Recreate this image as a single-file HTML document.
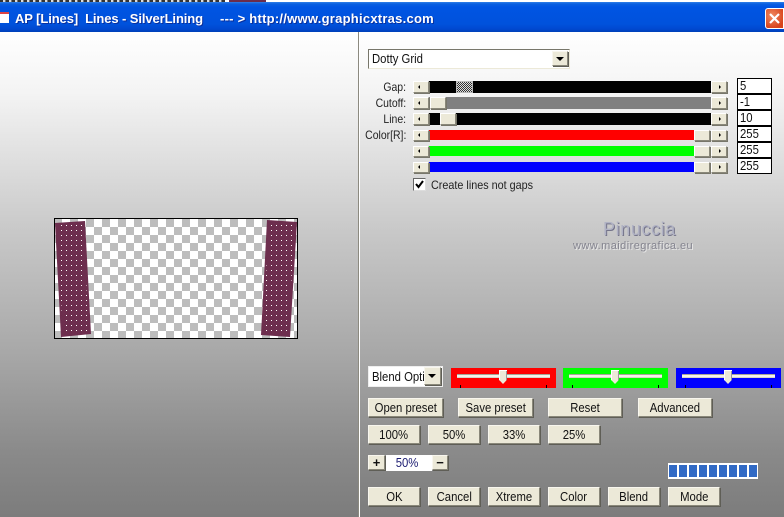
<!DOCTYPE html>
<html><head><meta charset="utf-8"><style>
html,body{margin:0;padding:0}
body{width:784px;height:517px;overflow:hidden;position:relative;background:#fff;font-family:"Liberation Sans",sans-serif;font-size:12px;color:#000}
div{box-sizing:border-box}
.a{position:absolute}
span{display:inline-block;transform:scaleX(.87);transform-origin:50% 50%;white-space:nowrap}
.b{position:absolute;background:#ece9d8;border:1px solid;border-color:#f8f6ee #8a887a #8a887a #f8f6ee;box-shadow:1px 1px 0 #5f5e56;text-align:center;color:#111;line-height:17px;font-size:13px;white-space:nowrap}
.l{position:absolute;text-align:right;width:60px;left:346px;color:#222;font-size:12px;line-height:14px}
.l span,.tl span{transform-origin:100% 50%}
.s{position:absolute;background:#ece9d8;border:1px solid;border-color:#fff #8a887a #8a887a #fff;box-shadow:1px 1px 0 #77766a}
.ar{position:absolute;width:0;height:0;border:2px solid transparent}
.i{position:absolute;left:737px;width:35px;height:16px;background:#fff;border:1px solid #000;font-size:13px;line-height:14px;padding-left:2px;color:#111}
.i span,.lft span{transform-origin:0 50%}
.sl{position:absolute;top:368px;height:20px;width:105px}
.tr{position:absolute;left:6px;top:6px;width:93px;height:4px;background:#f4f3ea;border-top:1px solid #a8a698;border-bottom:1px solid #d8d6c8}
.th{position:absolute;top:2px;width:8px;height:14px;background:#ece9d8;clip-path:polygon(0 0,100% 0,100% 70%,50% 100%,0 70%);box-shadow:inset 1px 1px 0 #fff,inset -1px 0 0 #999}
.tk{position:absolute;top:17px;width:1px;height:3px;background:#000}
</style></head><body>
<div class="a" style="left:0;top:0;width:784px;height:2px;background:#fff;overflow:hidden"><div class="a" style="left:0;top:0;width:225px;height:2px;background:repeating-linear-gradient(90deg,#333 0 3px,#ddd 3px 5px,#777 5px 6px)"></div><div class="a" style="left:229px;top:0;width:37px;height:2px;background:#6b2c4c"></div></div>
<div class="a" style="left:0;top:2px;width:784px;height:30px;background:linear-gradient(180deg,#2f7fe8 0,#0a5fe0 2px,#0054e3 5px,#0052dc 22px,#0048d0 27px,#0040b8 30px)"></div>
<div class="a" style="left:0;top:12px;width:9px;height:11px;background:#fff;border-top:2px solid #d44"></div>
<div class="a" style="left:15px;top:11px;color:#fff;font-weight:bold;font-size:13px;line-height:15px;white-space:pre;text-shadow:1px 1px 0 #0a2f9c;letter-spacing:-.1px">AP [Lines]  Lines - SilverLining</div>
<div class="a" style="left:220px;top:11px;color:#fff;font-weight:bold;font-size:13px;line-height:15px;white-space:pre;text-shadow:1px 1px 0 #0a2f9c;letter-spacing:.25px">--- &gt; http://www.graphicxtras.com</div>
<div class="a" style="left:765px;top:8px;width:19px;height:21px;background:radial-gradient(circle at 35% 35%,#f08a60,#d8431c 75%);border:1px solid #fff;border-radius:3px 0 0 3px"><svg width="17" height="19" style="display:block"><path d="M4 5L13 14M13 5L4 14" stroke="#fff" stroke-width="2.2"/></svg></div>

<div class="a" style="left:0;top:32px;width:784px;height:485px;background:linear-gradient(180deg,#fff 0,#f4f4f4 60px,#c8c8c8 200px,#a8a8a8 320px,#8a8a8a 420px,#7c7c7c 485px)"></div>
<div class="a" style="left:358px;top:32px;width:1px;height:485px;background:#8c8a80"></div>
<div class="a" style="left:359px;top:32px;width:1px;height:485px;background:#fff"></div>

<svg class="a" style="left:54px;top:218px" width="245" height="122" viewBox="0 0 245 122" shape-rendering="crispEdges">
<defs>
<pattern id="c" width="16" height="16" patternUnits="userSpaceOnUse" x="0" y="1"><rect width="16" height="16" fill="#fff"/><rect width="8" height="8" fill="#bdbdbd"/><rect x="8" y="8" width="8" height="8" fill="#bdbdbd"/></pattern>
<pattern id="d" width="5" height="5" patternUnits="userSpaceOnUse" x="2" y="2"><rect width="1" height="1" fill="#fff"/></pattern>
</defs>
<rect x=".5" y=".5" width="243" height="120" fill="url(#c)" stroke="#000"/>
<path d="M1 5L31 3L37 116L7 119Z" fill="#6d2e4e" shape-rendering="auto"/><path d="M3 7L29 5L35 114L9 117Z" fill="url(#d)"/>
<path d="M213 2L243 4L236 119L207 117Z" fill="#6d2e4e" shape-rendering="auto"/><path d="M215 4L241 6L234 117L209 115Z" fill="url(#d)"/>
</svg>

<div class="a lft" style="left:368px;top:49px;width:202px;height:20px;background:#fff;border:1px solid;border-color:#77766a #ece9d8 #ece9d8 #77766a;padding-left:3px;line-height:18px;font-size:13px;color:#111"><span>Dotty Grid</span></div>
<div class="b" style="left:552px;top:51px;width:16px;height:15px"><div class="a" style="left:3px;top:5px;width:0;height:0;border:4px solid transparent;border-top:4px solid #000;border-bottom:0"></div></div>

<div class="l" style="top:80px"><span>Gap:</span></div><div class="l" style="top:96px"><span>Cutoff:</span></div><div class="l" style="top:112px"><span>Line:</span></div><div class="l" style="top:128px"><span>Color[R]:</span></div>

<div class="a" style="left:429px;top:81px;width:283px;height:12px;background:#000"></div>
<div class="a" style="left:456px;top:81px;width:17px;height:12px;background:repeating-conic-gradient(#333 0 25%,#ddd 0 50%) 0 0/2px 2px;border:1px solid #bbb"></div>
<div class="a" style="left:429px;top:97px;width:283px;height:12px;background:#808080"></div>
<div class="a" style="left:429px;top:113px;width:283px;height:12px;background:#000"></div>
<div class="a" style="left:429px;top:130px;width:265px;height:10px;background:#f00"></div>
<div class="a" style="left:429px;top:146px;width:265px;height:10px;background:#0f0"></div>
<div class="a" style="left:429px;top:162px;width:265px;height:10px;background:#00f"></div>

<div class="s" style="left:413px;top:81px;width:16px;height:12px"><i class="ar" style="left:4px;top:3px;border-right-color:#000;border-left:0"></i></div>
<div class="s" style="left:413px;top:97px;width:16px;height:12px"><i class="ar" style="left:4px;top:3px;border-right-color:#000;border-left:0"></i></div>
<div class="s" style="left:413px;top:113px;width:16px;height:12px"><i class="ar" style="left:4px;top:3px;border-right-color:#000;border-left:0"></i></div>
<div class="s" style="left:413px;top:130px;width:16px;height:11px"><i class="ar" style="left:4px;top:2px;border-right-color:#000;border-left:0"></i></div>
<div class="s" style="left:413px;top:146px;width:16px;height:11px"><i class="ar" style="left:4px;top:2px;border-right-color:#000;border-left:0"></i></div>
<div class="s" style="left:413px;top:162px;width:16px;height:11px"><i class="ar" style="left:4px;top:2px;border-right-color:#000;border-left:0"></i></div>
<div class="s" style="left:430px;top:97px;width:16px;height:12px"></div>
<div class="s" style="left:440px;top:113px;width:16px;height:12px"></div>
<div class="s" style="left:694px;top:130px;width:16px;height:11px"></div>
<div class="s" style="left:694px;top:146px;width:16px;height:11px"></div>
<div class="s" style="left:694px;top:162px;width:16px;height:11px"></div>
<div class="s" style="left:711px;top:81px;width:16px;height:12px"><i class="ar" style="left:7px;top:3px;border-left-color:#000;border-right:0"></i></div>
<div class="s" style="left:711px;top:97px;width:16px;height:12px"><i class="ar" style="left:7px;top:3px;border-left-color:#000;border-right:0"></i></div>
<div class="s" style="left:711px;top:113px;width:16px;height:12px"><i class="ar" style="left:7px;top:3px;border-left-color:#000;border-right:0"></i></div>
<div class="s" style="left:711px;top:130px;width:16px;height:11px"><i class="ar" style="left:7px;top:2px;border-left-color:#000;border-right:0"></i></div>
<div class="s" style="left:711px;top:146px;width:16px;height:11px"><i class="ar" style="left:7px;top:2px;border-left-color:#000;border-right:0"></i></div>
<div class="s" style="left:711px;top:162px;width:16px;height:11px"><i class="ar" style="left:7px;top:2px;border-left-color:#000;border-right:0"></i></div>

<div class="i" style="top:78px"><span>5</span></div><div class="i" style="top:94px"><span>-1</span></div><div class="i" style="top:110px"><span>10</span></div><div class="i" style="top:126px"><span>255</span></div><div class="i" style="top:142px"><span>255</span></div><div class="i" style="top:158px"><span>255</span></div>

<div class="a" style="left:413px;top:178px;width:13px;height:13px;background:#fff;border:1px solid;border-color:#666 #ddd #ddd #666"><svg width="11" height="11" style="display:block"><path d="M2 5L4.5 8L9 2" fill="none" stroke="#000" stroke-width="2"/></svg></div>
<div class="a lft" style="left:431px;top:178px;color:#222;font-size:12px;line-height:14px;white-space:nowrap"><span style="transform:scaleX(.9)">Create lines not gaps</span></div>

<div class="a" style="left:603px;top:219px;font-size:18px;line-height:20px;color:#b0b2c4;text-shadow:1px 1px 0 #74748a;letter-spacing:.6px;white-space:nowrap">Pinuccia</div>
<div class="a" style="left:573px;top:240px;font-size:11px;line-height:13px;color:#84848f;text-shadow:1px 1px 0 #e8e8e8;white-space:nowrap;letter-spacing:.45px">www.maidiregrafica.eu</div>

<div class="a lft" style="left:368px;top:366px;width:75px;height:21px;background:#fff;border:1px solid #eee;overflow:hidden;padding-left:3px;line-height:19px;font-size:13px;color:#111;white-space:nowrap"><span>Blend Option</span></div>
<div class="b" style="left:424px;top:367px;width:17px;height:18px"><div class="a" style="left:3px;top:6px;width:0;height:0;border:4px solid transparent;border-top:4px solid #000;border-bottom:0"></div></div>

<div class="sl" style="left:451px;background:#f00"><div class="tr"></div><div class="th" style="left:48px"></div><div class="tk" style="left:9px"></div><div class="tk" style="left:95px"></div></div>
<div class="sl" style="left:563px;background:#0f0"><div class="tr"></div><div class="th" style="left:48px"></div><div class="tk" style="left:9px"></div><div class="tk" style="left:95px"></div></div>
<div class="sl" style="left:676px;background:#00f"><div class="tr"></div><div class="th" style="left:48px"></div><div class="tk" style="left:9px"></div><div class="tk" style="left:95px"></div></div>

<div class="b" style="left:368px;top:398px;width:75px;height:19px"><span>Open preset</span></div>
<div class="b" style="left:458px;top:398px;width:75px;height:19px"><span>Save preset</span></div>
<div class="b" style="left:548px;top:398px;width:74px;height:19px"><span>Reset</span></div>
<div class="b" style="left:638px;top:398px;width:74px;height:19px"><span>Advanced</span></div>

<div class="b" style="left:368px;top:425px;width:52px;height:19px"><span>100%</span></div>
<div class="b" style="left:428px;top:425px;width:52px;height:19px"><span>50%</span></div>
<div class="b" style="left:488px;top:425px;width:52px;height:19px"><span>33%</span></div>
<div class="b" style="left:548px;top:425px;width:52px;height:19px"><span>25%</span></div>

<div class="b" style="left:368px;top:455px;width:17px;height:15px;line-height:13px;font-weight:bold">+</div>
<div class="a" style="left:386px;top:455px;width:46px;height:16px;background:#fff;text-align:center;color:#1a1a70;line-height:16px;font-size:13px;padding-right:3px"><span>50%</span></div>
<div class="b" style="left:432px;top:455px;width:16px;height:15px;line-height:13px;font-weight:bold">−</div>

<div class="a" style="left:668px;top:463px;width:90px;height:16px;background:#fff;padding:2px 1px;display:flex;gap:2px">
<i style="width:8px;background:#316ac5"></i><i style="width:8px;background:#316ac5"></i><i style="width:8px;background:#316ac5"></i><i style="width:8px;background:#316ac5"></i><i style="width:8px;background:#316ac5"></i><i style="width:8px;background:#316ac5"></i><i style="width:8px;background:#316ac5"></i><i style="width:8px;background:#316ac5"></i><i style="width:8px;background:#316ac5"></i></div>

<div class="b" style="left:368px;top:487px;width:52px;height:19px"><span>OK</span></div>
<div class="b" style="left:428px;top:487px;width:52px;height:19px"><span>Cancel</span></div>
<div class="b" style="left:488px;top:487px;width:52px;height:19px"><span>Xtreme</span></div>
<div class="b" style="left:548px;top:487px;width:52px;height:19px"><span>Color</span></div>
<div class="b" style="left:608px;top:487px;width:52px;height:19px"><span>Blend</span></div>
<div class="b" style="left:668px;top:487px;width:52px;height:19px"><span>Mode</span></div>
</body></html>
